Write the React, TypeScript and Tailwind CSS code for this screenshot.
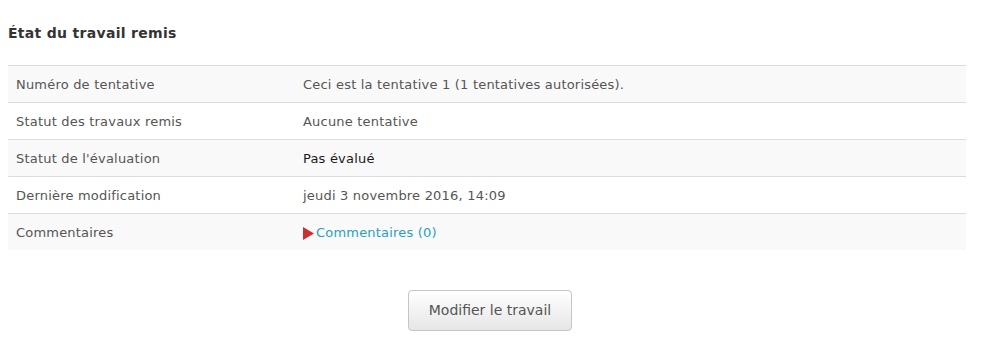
import React from 'react';

const rows: { label: string; value: React.ReactNode }[] = [
  { label: 'Numéro de tentative', value: 'Ceci est la tentative 1 (1 tentatives autorisées).' },
  { label: 'Statut des travaux remis', value: 'Aucune tentative' },
  { label: "Statut de l'évaluation", value: <span className="text-[#1a1a1a]">Pas évalué</span> },
  { label: 'Dernière modification', value: 'jeudi 3 novembre 2016, 14:09' },
  {
    label: 'Commentaires',
    value: (
      <span className="flex items-center">
        <svg width="11" height="13" viewBox="0 0 11 13" className="mr-[2px]">
          <path d="M0 0 L11 6.5 L0 13 Z" fill="#cc2f2f" />
        </svg>
        <span className="text-[#2a9fbd]">Commentaires (0)</span>
      </span>
    ),
  },
];

export default function App() {
  return (
    <div className="bg-white w-[1006px] h-[357px] px-2 font-['DejaVu_Sans',sans-serif] text-[13px] tracking-[0.2px] text-[#555]">
      <h3 className="pt-[23px] h-[65px] text-[14px] tracking-[0.3px] font-bold text-[#333]">État du travail remis</h3>
      <div className="w-[958px]">
        {rows.map((row, i) => (
          <div
            key={row.label}
            className={`flex h-[37px] items-center pt-[2px] border-t border-[#ddd] ${i % 2 === 0 ? 'bg-[#f9f9f9]' : 'bg-white'}`}
          >
            <div className="w-[295px] pl-2">{row.label}</div>
            <div className="flex-1">{row.value}</div>
          </div>
        ))}
      </div>
      <div className="w-[964px] flex justify-center pt-[40px]">
        <button className="w-[164px] h-[41px] rounded-[4px] border border-[#c5c5c5] bg-gradient-to-b from-white to-[#e6e6e6] text-[14px] tracking-normal text-[#555]">
          Modifier le travail
        </button>
      </div>
    </div>
  );
}
